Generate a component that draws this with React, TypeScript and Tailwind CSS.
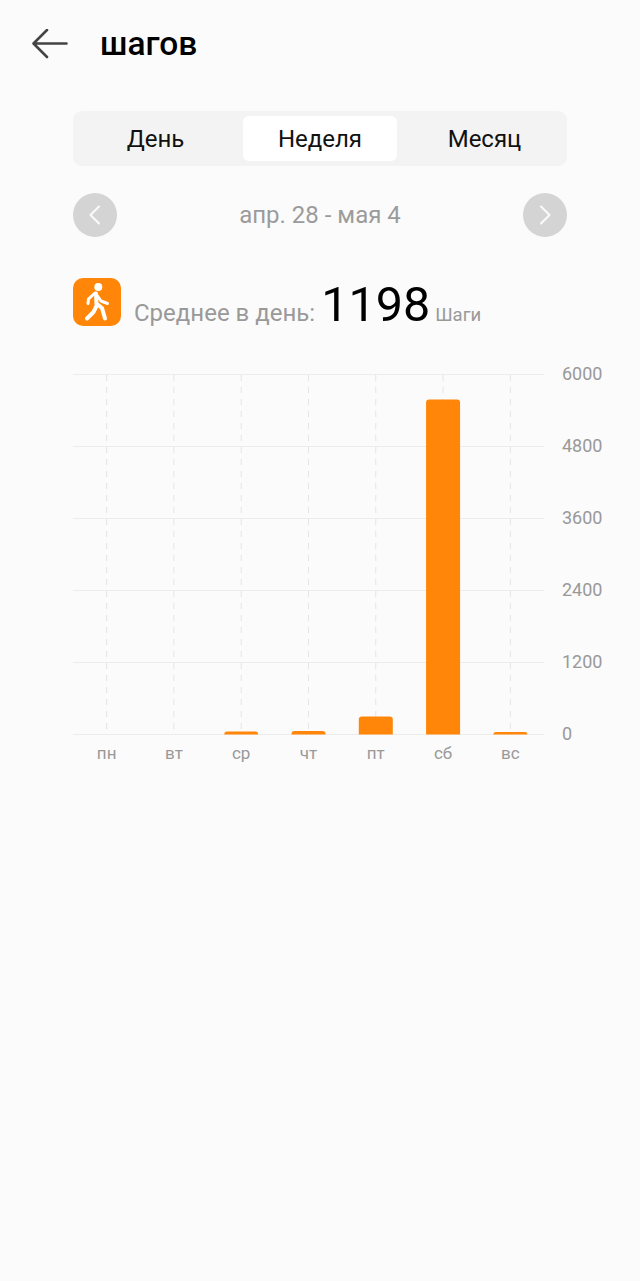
import React from 'react';

const days = [
  { name: 'пн', height: 0 },
  { name: 'вт', height: 0 },
  { name: 'ср', height: 3 },
  { name: 'чт', height: 3.5 },
  { name: 'пт', height: 18 },
  { name: 'сб', height: 335 },
  { name: 'вс', height: 2.5 },
];

const ticks = ['6000', '4800', '3600', '2400', '1200', '0'];

const COL = 471 / 7;
const BASE = 360.5;

const Chart: React.FC = () => (
  <svg width="471" height="361" viewBox="0 0 471 361" className="block shrink-0">
    {days.map((d, i) => (
      <line
        key={d.name}
        x1={COL * i + COL / 2}
        x2={COL * i + COL / 2}
        y1="1"
        y2={BASE}
        stroke="#e4e4e4"
        strokeWidth="1"
        strokeDasharray="6 6"
      />
    ))}
    {[0.5, 72.5, 144.5, 216.5, 288.5, 360.5].map((y) => (
      <line key={y} x1="0" x2="471" y1={y} y2={y} stroke="#ececec" strokeWidth="1" />
    ))}
    {days.map((d, i) => {
      if (!d.height) return null;
      const x = COL * i + COL / 2 - 17;
      const y = BASE - d.height;
      const r = Math.min(3, d.height);
      return (
        <path
          key={d.name}
          d={`M${x} ${BASE}V${y + r}Q${x} ${y} ${x + r} ${y}H${x + 34 - r}Q${x + 34} ${y} ${x + 34} ${y + r}V${BASE}Z`}
          fill="#ff8609"
        />
      );
    })}
  </svg>
);

const NavButton: React.FC<{ dir: 'left' | 'right' }> = ({ dir }) => (
  <div className="flex h-11 w-11 items-center justify-center rounded-full bg-[#d4d4d4]">
    <svg width="44" height="44" viewBox="0 0 44 44" fill="none">
      <path
        d={dir === 'left' ? 'M26 13.5 17.5 22l8.5 8.5' : 'M18 13.5 26.5 22 18 30.5'}
        stroke="#fbfbfb"
        strokeWidth="2"
        strokeLinecap="round"
        strokeLinejoin="round"
      />
    </svg>
  </div>
);

export default function App() {
  return (
    <div className="flex h-[1281px] w-[640px] flex-col overflow-hidden bg-[#fbfbfb] font-['Roboto',sans-serif]">
      <header className="flex h-[88px] items-center pl-8">
        <svg width="36" height="30" viewBox="0 0 36 30" fill="none" className="shrink-0">
          <path
            d="M34.5 14.5H1.5M15 1 1.5 14.5 15 28"
            stroke="#444444"
            strokeWidth="2.6"
            strokeLinecap="round"
            strokeLinejoin="round"
          />
        </svg>
        <h1 className="ml-8 text-[33.5px] leading-none font-medium text-black">шагов</h1>
      </header>

      <div className="mt-[23px] flex flex-col px-[73px]">
        <div className="grid h-[55px] w-[494px] grid-cols-[170px_154px_170px] rounded-[9px] bg-[#f3f3f3] py-[5px] text-[24px] text-[#111111]">
          <div className="flex items-center justify-center pr-[5px]">День</div>
          <div className="flex items-center justify-center rounded-[6px] bg-white">Неделя</div>
          <div className="flex items-center justify-center pl-[5px]">Месяц</div>
        </div>

        <div className="mt-[27px] flex w-[494px] items-center justify-between">
          <NavButton dir="left" />
          <span className="text-[24px] text-[#9b9b9b]">апр. 28 - мая 4</span>
          <NavButton dir="right" />
        </div>

        <div className="mt-[41px] flex h-[48px] items-center">
          <div className="h-12 w-12 shrink-0 rounded-[10px] bg-[#ff8609]">
            <svg width="48" height="48" viewBox="0 0 48 48" fill="none">
              <circle cx="25.3" cy="9" r="4" fill="#fff" />
              <path d="M22 15 15.5 21 15 25.5M24.5 18l3.5 5 6.5 2.5" stroke="#fff" strokeWidth="3" strokeLinecap="round" strokeLinejoin="round" />
              <path d="M23 15.5 23.5 27M24 27l-3.5 7-6.5 6.5M24 26l5 4 3 10.5" stroke="#fff" strokeWidth="4" strokeLinecap="round" strokeLinejoin="round" />
            </svg>
          </div>
          <div className="ml-[13px] flex items-baseline whitespace-nowrap pt-[7px]">
            <span className="text-[24px] text-[#999999]">Среднее в день:</span>
            <span className="ml-[6px] text-[48.5px] leading-[48px] text-black">1198</span>
            <span className="ml-[5px] text-[18.5px] text-[#999999]">Шаги</span>
          </div>
        </div>

        <div className="mt-[48px] flex w-[530px]">
          <Chart />
          <div className="ml-[18px] -my-[12px] flex h-[384px] flex-col justify-between text-[18px] leading-[24px] text-[#999999]">
            {ticks.map((t) => (
              <span key={t}>{t}</span>
            ))}
          </div>
        </div>

        <div className="mt-[6px] flex w-[471px] text-[17px] leading-6 text-[#999999]">
          {days.map((d) => (
            <span key={d.name} className="flex-1 text-center">
              {d.name}
            </span>
          ))}
        </div>
      </div>
    </div>
  );
}
